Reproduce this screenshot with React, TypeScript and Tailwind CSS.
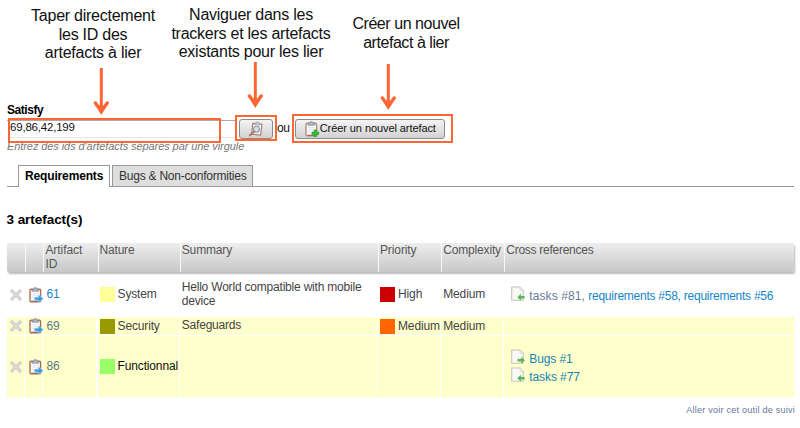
import React from "react";

function DownArrow({ height, className }: { height: number; className: string }) {
  return (
    <svg className={className} width="16" height={height} viewBox={`0 0 16 ${height}`} fill="none">
      <path d={`M8.3 0V${height - 4}`} stroke="#ff6633" strokeWidth="3" />
      <path d={`M2.4 ${height - 12}L8.3 ${height - 3.6}L14.2 ${height - 12}`} stroke="#ff6633" strokeWidth="3.4" strokeLinecap="round" />
      <path d={`M3.6 ${height - 8.5}L8.3 ${height - 10}L13 ${height - 8.5}L8.3 ${height}Z`} fill="#ff6633" />
    </svg>
  );
}

function Clipboard({ kind }: { kind: "link" | "add" | "search" }) {
  return (
    <svg width="16" height="16" viewBox="0 0 16 16" fill="none" className="block shrink-0">
      {kind === "search" ? (
        <>
          <path d="M4.8 2.3L14 3.2L12.6 14.2L3.6 13.2Z" fill="#f8f6f6" stroke="#b5806a" strokeWidth="1.2" />
          <path d="M6.6 3.6L6.9 2.2L8.2 1.9L8.8 .8L10.4 1L10.8 2.2L12 2.6L11.8 4.1Z" fill="#c4c8d4" stroke="#8b8f9e" strokeWidth=".6" />
          <circle cx="8.4" cy="8.2" r="3" fill="#cfe3ee" stroke="#8c98a5" strokeWidth="1.1" />
          <path d="M6.2 10.5L1.8 14.4" stroke="#a87d68" strokeWidth="2" strokeLinecap="round" />
        </>
      ) : (
        <>
          <rect x="2" y="2.2" width="10.6" height="12.6" rx="1" fill="#f7f8fb" stroke={kind === "add" ? "#b5907a" : "#ae6f50"} strokeWidth="1.4" />
          <path d="M3.8 14.2H11.5" stroke="#8a5f52" strokeWidth=".8" />
          <path d="M4 4.2V2.2H5.8L6.3 .7H8.3L8.8 2.2H10.6V4.2Z" fill="#b4b9c6" stroke="#7f8492" strokeWidth=".7" />
          <path d="M4.6 6.6H10M4.6 8.6H9.3M4.6 10.6H6.5" stroke="#dde1ea" strokeWidth=".8" />
          {kind === "link" ? (
            <path d="M6.6 10.2H10.4V7.8L15.4 11.7L10.4 15.5V13.2H6.6Z" fill="#3d9bdc" stroke="#a5d6f3" strokeWidth=".6" />
          ) : (
            <path d="M10 8.9H12.7V11H14.8V13.6H12.7V15.7H10V13.6H7.9V11H10Z" fill="#39bd36" stroke="#1b8f20" strokeWidth=".5" />
          )}
        </>
      )}
    </svg>
  );
}

function Cross() {
  return (
    <svg width="12" height="12" viewBox="0 0 12 12" className="block">
      <path d="M2 2.2L10 9.8M10 2.2L2 9.8" stroke="#c0c0c0" strokeWidth="3" strokeLinecap="square" />
      <path d="M2 2.2L10 9.8M10 2.2L2 9.8" stroke="#dcdcdc" strokeWidth="1.8" strokeLinecap="square" />
    </svg>
  );
}

function PageArrow({ dir }: { dir: "in" | "out" }) {
  return (
    <svg width="14" height="16" viewBox="0 0 14 16" className="block shrink-0">
      <path d="M.7 1H9L12.2 4.2V14.3H.7Z" fill="#f9f9f6" stroke="#c6c6bd" strokeWidth="1.1" />
      <path d="M9 1V4.2H12.2" fill="#eee" stroke="#d0d0c8" strokeWidth=".6" />
      {dir === "in" ? (
        <path d="M6.3 11.2L10 7.7V9.9H13.6V12.6H10V14.7Z" fill="#5cb554" />
      ) : (
        <path d="M13.8 11.2L10.1 7.7V9.9H6.5V12.6H10.1V14.7Z" fill="#5cb554" />
      )}
    </svg>
  );
}

const COLS = "grid grid-cols-[17px_17px_53px_81px_197px_62px_62px_290px] gap-x-[1.2px]";

const headers: [string, string][] = [
  ["", ""],
  ["", ""],
  ["Artifact ID", "w-10 tracking-[-0.05px]"],
  ["Nature", "tracking-[-0.2px]"],
  ["Summary", "tracking-[-0.15px]"],
  ["Priority", "tracking-[-0.1px]"],
  ["Complexity", "tracking-[-0.15px]"],
  ["Cross references", "tracking-[-0.27px]"],
];

type Row = {
  id: string;
  idColor: string;
  swatch: string;
  nature: string;
  natureColor: string;
  summary: string;
  priority: string;
  prioritySwatch: string;
  complexity: string;
  height: string;
  cell: string;
};

const rows: Row[] = [
  { id: "61", idColor: "text-[#1685c9]", swatch: "bg-[#ffff99]", nature: "System", natureColor: "text-[#444]", summary: "Hello World compatible with mobile device", priority: "High", prioritySwatch: "bg-[#cc0000]", complexity: "Medium", height: "h-[45px]", cell: "" },
  { id: "69", idColor: "text-[#5f7888]", swatch: "bg-[#999900]", nature: "Security", natureColor: "text-[#444]", summary: "Safeguards", priority: "Medium", prioritySwatch: "bg-[#ff6600]", complexity: "Medium", height: "h-[18px]", cell: "bg-[#ffffcc]" },
  { id: "86", idColor: "text-[#5f7888]", swatch: "bg-[#99ff66]", nature: "Functionnal", natureColor: "text-[#111]", summary: "", priority: "", prioritySwatch: "", complexity: "", height: "h-[61px]", cell: "bg-[#ffffcc]" },
];

function References({ id }: { id: string }) {
  if (id === "61")
    return (
      <div className="flex items-start pl-[7px]">
        <PageArrow dir="in" />
        <span className="mt-[3px] ml-[4px] tracking-[-0.25px] text-[#1685c9]">
          <span className="tracking-[0.08px] text-[#6a7896]">tasks #81, </span>requirements #58, requirements #56
        </span>
      </div>
    );
  if (id === "86")
    return (
      <div className="flex flex-col gap-[1px] pl-[7px] text-[#1584b5]">
        <div className="flex items-start"><PageArrow dir="out" /><span className="mt-[3px] ml-[4px] tracking-[-0.1px]">Bugs #1</span></div>
        <div className="flex items-start"><PageArrow dir="in" /><span className="mt-[3px] ml-[4px] tracking-[-0.1px]">tasks #77</span></div>
      </div>
    );
  return null;
}

export default function App() {
  return (
    <div className="relative h-[428px] w-[800px] overflow-hidden bg-white font-['Liberation_Sans',Arial,sans-serif] text-[12px] leading-[14px] whitespace-nowrap text-[#444]">
      <header className="flex h-[103px] items-start text-center text-[16px] leading-[18.5px] tracking-[-0.25px] text-[#111]">
        <p className="ml-[28px] w-[130px] pt-[7px]">Taper directement<br />les ID des<br />artefacts à lier</p>
        <p className="ml-[8px] w-[170px] pt-[6px]">Naviguer dans les<br />trackers et les artefacts<br />existants pour les lier</p>
        <p className="ml-[10px] w-[120px] pt-[15px] tracking-[-0.45px]">Créer un nouvel<br />artefact à lier</p>
      </header>

      <section className="ml-[7px] flex flex-col">
        <label className="h-[15px] font-bold tracking-[-0.45px] text-black">Satisfy</label>
        <div className="flex h-[21px] items-center text-[#111]">
          <div className="flex h-[18px] w-[229px] items-center border-y border-t-[#aaa] border-b-[#e5e5e5] pb-[3px] pl-[3px] text-[11.5px] tracking-[-0.2px]">69,86,42,199</div>
          <button className="ml-[3px] flex h-[20px] w-[34px] items-center justify-center rounded-[3px] border border-[#8a8a8a] bg-linear-to-b from-[#f4f4f4] to-[#d2d2d2]">
            <Clipboard kind="search" />
          </button>
          <span className="ml-[4px] pb-px text-[12px] tracking-[-0.3px]">ou</span>
          <button className="ml-[5px] flex h-[20px] w-[150px] items-center rounded-[3px] border border-[#8a8a8a] bg-linear-to-b from-[#f4f4f4] to-[#d2d2d2] pl-[8px] text-[11px]">
            <Clipboard kind="add" />
            <span className="pb-[2px] tracking-[-0.08px]">Créer un nouvel artefact</span>
          </button>
        </div>
        <p className="h-[26px] text-[11px] leading-[14px] tracking-[-0.08px] text-[#777] italic">Entrez des ids d'artefacts séparés par une virgule</p>
      </section>

      <nav className="ml-[7px] flex h-[22px] items-end text-[#333]">
        <span className="h-px w-[11px] bg-[#999]" />
        <div className="flex h-[22px] w-[92px] items-center border border-b-0 border-[#999] pb-px pl-[6px] font-bold tracking-[-0.15px] text-black">Requirements</div>
        <span className="h-px w-[2px] bg-[#999]" />
        <div className="flex h-[22px] w-[141px] items-center border border-[#999] bg-[#dedede] pl-[6px] tracking-[-0.23px]">Bugs &amp; Non-conformities</div>
        <span className="h-px w-[541px] bg-[#999]" />
      </nav>

      <h2 className="mt-[25px] ml-[6.5px] h-[31px] text-[13.5px] leading-[15px] font-bold tracking-[-0.05px] text-black">3 artefact(s)</h2>

      <main className="ml-[7px] w-[788px]">
        <div className={`${COLS} h-[29px] w-[787px] rounded-[2px] bg-linear-to-b from-[#eeeeee] to-[#c8c8c8] text-[#555] shadow-[1px_2px_2px_#bbb]`}>
          {headers.map(([title, cls], i) => (
            <div key={i} className={`h-full pl-[1px] whitespace-normal ${i > 0 ? "border-l border-l-[#f7f7f7]" : ""}`}>
              <div className={cls}>{title}</div>
            </div>
          ))}
        </div>
        {rows.map((r) => (
          <div key={r.id} className={`${COLS} ${r.height} ${r.id === "86" ? "mt-px" : ""}`}>
            <div className={`flex items-center pl-[3px] ${r.cell}`}><Cross /></div>
            <div className={`flex items-center pl-[3px] ${r.cell}`}><Clipboard kind="link" /></div>
            <div className={`flex items-center pb-px pl-[3px] ${r.cell} ${r.idColor}`}>{r.id}</div>
            <div className={`flex items-center pl-[2px] ${r.cell} ${r.natureColor}`}>
              <span className={`h-[15px] w-[15px] ${r.swatch}`} />
              <span className="ml-[3px] pb-px tracking-[-0.15px]">{r.nature}</span>
            </div>
            <div className={`flex items-center pb-[2px] pl-[2px] tracking-[-0.2px] whitespace-normal ${r.cell}`}><span className="w-[188px]">{r.summary}</span></div>
            <div className={`flex items-center pl-[2px] ${r.cell}`}>
              {r.priority && <span className={`h-[15px] w-[15px] shrink-0 ${r.prioritySwatch}`} />}
              <span className="ml-[3px] pb-px tracking-[-0.1px]">{r.priority}</span>
            </div>
            <div className={`flex items-center pb-px pl-[2px] tracking-[-0.1px] ${r.cell}`}>{r.complexity}</div>
            <div className={`flex items-center ${r.cell}`}><References id={r.id} /></div>
          </div>
        ))}
      </main>

      <footer className="mt-[6px] flex w-[795px] justify-end text-[9px] tracking-[0.25px] text-[#65759a]">Aller voir cet outil de suivi</footer>

      <DownArrow height={47} className="absolute top-[68px] left-[93px]" />
      <DownArrow height={46} className="absolute top-[62px] left-[247px]" />
      <DownArrow height={46} className="absolute top-[64px] left-[380px]" />
      <div className="absolute top-[118px] left-[8px] h-[25px] w-[213px] border-2 border-[#ff6633]" />
      <div className="absolute top-[115px] left-[235px] h-[26px] w-[42px] border-2 border-[#ff6633]" />
      <div className="absolute top-[114px] left-[292px] h-[29px] w-[161px] border-2 border-[#ff6633]" />
    </div>
  );
}
